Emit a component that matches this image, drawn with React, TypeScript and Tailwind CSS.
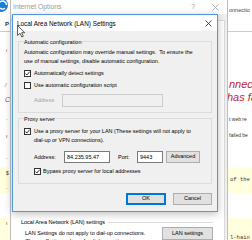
import type { ReactNode } from 'react';

const ui = "font-['Liberation_Sans',Arial,sans-serif]";

function Check({ checked }: { checked?: boolean }) {
  return (
    <span className="flex h-[7px] w-[7px] shrink-0 items-center justify-center border border-[#333333] bg-white">
      {checked && (
        <svg width="5" height="5" viewBox="0 0 5 5" fill="none">
          <path d="M0.4 2.5 L1.9 4 L4.6 0.7" stroke="#1a1a1a" strokeWidth="0.9" />
        </svg>
      )}
    </span>
  );
}

function Group({ title, children }: { title: string; children: ReactNode }) {
  return (
    <div className="border border-[#dcdcdc] px-[5px]">
      <div className="-mt-[3px] leading-[7px]">
        <span className="inline-block bg-[#f0f0f0] pr-[1px]">{title}</span>
      </div>
      {children}
    </div>
  );
}

function Btn({ label, main, className = '' }: { label: string; main?: boolean; className?: string }) {
  return (
    <div
      className={`flex items-center justify-center bg-[#e1e1e1] leading-none ${
        main ? 'border border-[#0078d7] shadow-[inset_0_0_0_1px_#0078d7]' : 'border border-[#adadad]'
      } ${className}`}
    >
      {label}
    </div>
  );
}

function CloseX({ color = '#222' }: { color?: string }) {
  return (
    <svg width="7" height="7" viewBox="0 0 7 7">
      <path d="M0.5 0.5 L6.5 6.5 M6.5 0.5 L0.5 6.5" stroke={color} strokeWidth="0.8" />
    </svg>
  );
}

function BackgroundPage() {
  return (
    <div className="flex h-[240px] w-[252px]">
      {/* left edge of the web page */}
      <div className="w-[10px] overflow-hidden text-[5px] leading-[6px]">
        <svg width="10" height="14" viewBox="0 0 10 14">
          <circle cx="1" cy="5" r="7" fill="#1c7fd6" />
          <path d="M6.5 5 A4 4 0 1 0 5 8.2" stroke="#fff" strokeWidth="1.4" fill="none" />
        </svg>
        <div className="mt-[7px] pl-[5px] text-[6px] font-bold leading-[7px] text-[#333]">P</div>
        <div className="mt-[3px] h-px bg-[#cccccc]" />
        <div className="mt-[15px] pl-[6px] italic text-[#c0262d]">ı</div>
        <div className="mt-[29px] pl-[5px] italic text-[#c0262d]">/</div>
        <div className="mt-[9px] pl-[5px] text-[7px] italic text-[#c0262d]">C</div>
        <div className="mt-[12px] pl-[6px] text-[#333]">.</div>
        <div className="mt-[12px] pl-[6px] text-[#333]">ı</div>
        <div className="mt-[15px] pl-[6px] text-[#333]">.</div>
        <div className="mt-[7px] h-[26px] bg-[#ffffdd] pl-[6px] pt-[3px] text-[#333]">
          <div>$</div>
          <div className="mt-[8px]">.</div>
        </div>
        <div className="mt-[25px] h-[24px] bg-[#ffffdd] pl-[6px] pt-[2px] text-[#333]">ı</div>
      </div>
      <div className="w-[218px]" />
      {/* right edge of the web page */}
      <div className="w-[24px] overflow-hidden whitespace-nowrap pl-px">
        <div className="mt-[7px] text-[5.5px] leading-[7px] text-[#444]">onnectio</div>
        <div className="-ml-px mt-[17px] h-px bg-[#cccccc]" />
        <div className="mt-[46px] text-[11px] italic leading-[13px] text-[#c0262d]">
          <div>nnec</div>
          <div className="-ml-[2px]">has fa</div>
        </div>
        <div className="mt-[12px] text-[5px] leading-[6px] text-[#333]">t web re</div>
        <div className="mt-[10px] text-[5px] leading-[6px] text-[#333]">failed be</div>
        <div className="-ml-px mt-[29px] h-[26px] bg-[#ffffdd] pl-[2px] pt-[10px] font-['Liberation_Mono',monospace] text-[5.5px] leading-[6px] text-[#333]">
          of the
        </div>
        <div className="-ml-px mt-[25px] h-[24px] bg-[#ffffdd] pl-[2px] pt-[17px] font-['Liberation_Mono',monospace] text-[5.5px] leading-[6px] text-[#333]">
          l-hain
        </div>
      </div>
    </div>
  );
}

function InternetOptions() {
  return (
    <div className="absolute left-[10px] top-0 flex h-[240px] w-[218px] flex-col border-x border-[#bdbdbd] bg-[#f0f0f0] text-[5.5px]">
      <div className="flex h-[14px] shrink-0 items-center bg-white pl-[2px] pr-[8px] text-[6.8px] text-[#9a9a9a]">
        <span>Internet Options</span>
        <span className="ml-auto mr-[17px]">?</span>
        <CloseX color="#9a9a9a" />
      </div>
      <div className="mr-[2px] mt-[6px] flex-1 border-r border-t border-[#d9d9d9] bg-white pl-[10px] pr-[11px]">
        <div className="h-[197px]" />
        <div className="flex items-center leading-[8px]">
          <span>Local Area Network (LAN) settings</span>
          <div className="ml-[3px] h-px flex-1 bg-[#dcdcdc]" />
        </div>
        <div className="mt-px flex items-start">
          <div className="ml-[4px] mt-[2px] leading-[8px]">
            LAN Settings do not apply to dial-up connections.
            <br />
            Choose Settings above for dial-up settings.
          </div>
          <Btn label="LAN settings" className="ml-auto h-[13px] w-[51px]" />
        </div>
      </div>
    </div>
  );
}

function LanDialog() {
  return (
    <div className="absolute left-[12px] top-[14px] w-[206px] border border-[#4f97de] bg-[#f0f0f0] text-[5.5px] text-black shadow-[0_2px_8px_rgba(0,0,0,0.25)]">
      <div className="flex h-[16px] items-center bg-white pl-[4px] pr-[5px] text-[6.4px]">
        <span className="pt-px">Local Area Network (LAN) Settings</span>
        <span className="ml-auto">
          <CloseX />
        </span>
      </div>
      <div className="px-[5px] pb-[6px] pt-[10px]">
        <Group title="Automatic configuration">
          <div className="mt-[2px] leading-[9px]">
            Automatic configuration may override manual settings.&nbsp; To ensure the
            <br />
            use of manual settings, disable automatic configuration.
          </div>
          <div className="mt-[3px] flex h-[9px] items-center gap-[3px]">
            <Check checked />
            <span>Automatically detect settings</span>
          </div>
          <div className="mt-[3px] flex h-[9px] items-center gap-[3px]">
            <Check />
            <span>Use automatic configuration script</span>
          </div>
          <div className="mt-[4px] flex items-center pb-[5px] pl-[10px]">
            <span className="w-[28px] text-[#a0a0a0]">Address</span>
            <div className="h-[13px] w-[101px] border border-[#cccccc] bg-[#f0f0f0]" />
          </div>
        </Group>
        <div className="mt-[5px]">
          <Group title="Proxy server">
            <div className="mt-[4px] flex items-start gap-[3px] leading-[9px]">
              <span className="mt-px">
                <Check checked />
              </span>
              <span>
                Use a proxy server for your LAN (These settings will not apply to
                <br />
                dial-up or VPN connections).
              </span>
            </div>
            <div className="mt-[6px] flex items-center pl-[10px]">
              <span className="w-[30px]">Address:</span>
              <div className="flex h-[12px] w-[46px] items-center border border-[#7a7a7a] bg-white pl-[2px]">84.235.95.47</div>
              <span className="ml-[8px] w-[19px]">Port:</span>
              <div className="flex h-[12px] w-[26px] items-center border border-[#7a7a7a] bg-white pl-[2px]">9443</div>
              <Btn label="Advanced" className="ml-[3px] h-[12px] w-[34px]" />
            </div>
            <div className="mt-[4px] flex h-[9px] items-center gap-[2px] pb-0 pl-[10px]">
              <Check checked />
              <span>Bypass proxy server for local addresses</span>
            </div>
            <div className="h-[7px]" />
          </Group>
        </div>
        <div className="mt-[9px] flex justify-end gap-[7px]">
          <Btn label="OK" main className="h-[12px] w-[40px]" />
          <Btn label="Cancel" className="h-[12px] w-[39px]" />
        </div>
      </div>
    </div>
  );
}

function Cursor() {
  return (
    <svg className="absolute left-[17px] top-[25px]" width="9" height="13" viewBox="0 0 9 13">
      <path d="M0.5 0.5 L0.5 10.5 L3 8.2 L4.8 12 L6.3 11.3 L4.6 7.7 L7.8 7.7 Z" fill="#fff" stroke="#333" strokeWidth="0.8" strokeLinejoin="round" />
    </svg>
  );
}

export default function App() {
  return (
    <div className={`relative h-[240px] w-[252px] overflow-hidden bg-white ${ui}`}>
      <BackgroundPage />
      <InternetOptions />
      <LanDialog />
      <Cursor />
    </div>
  );
}
